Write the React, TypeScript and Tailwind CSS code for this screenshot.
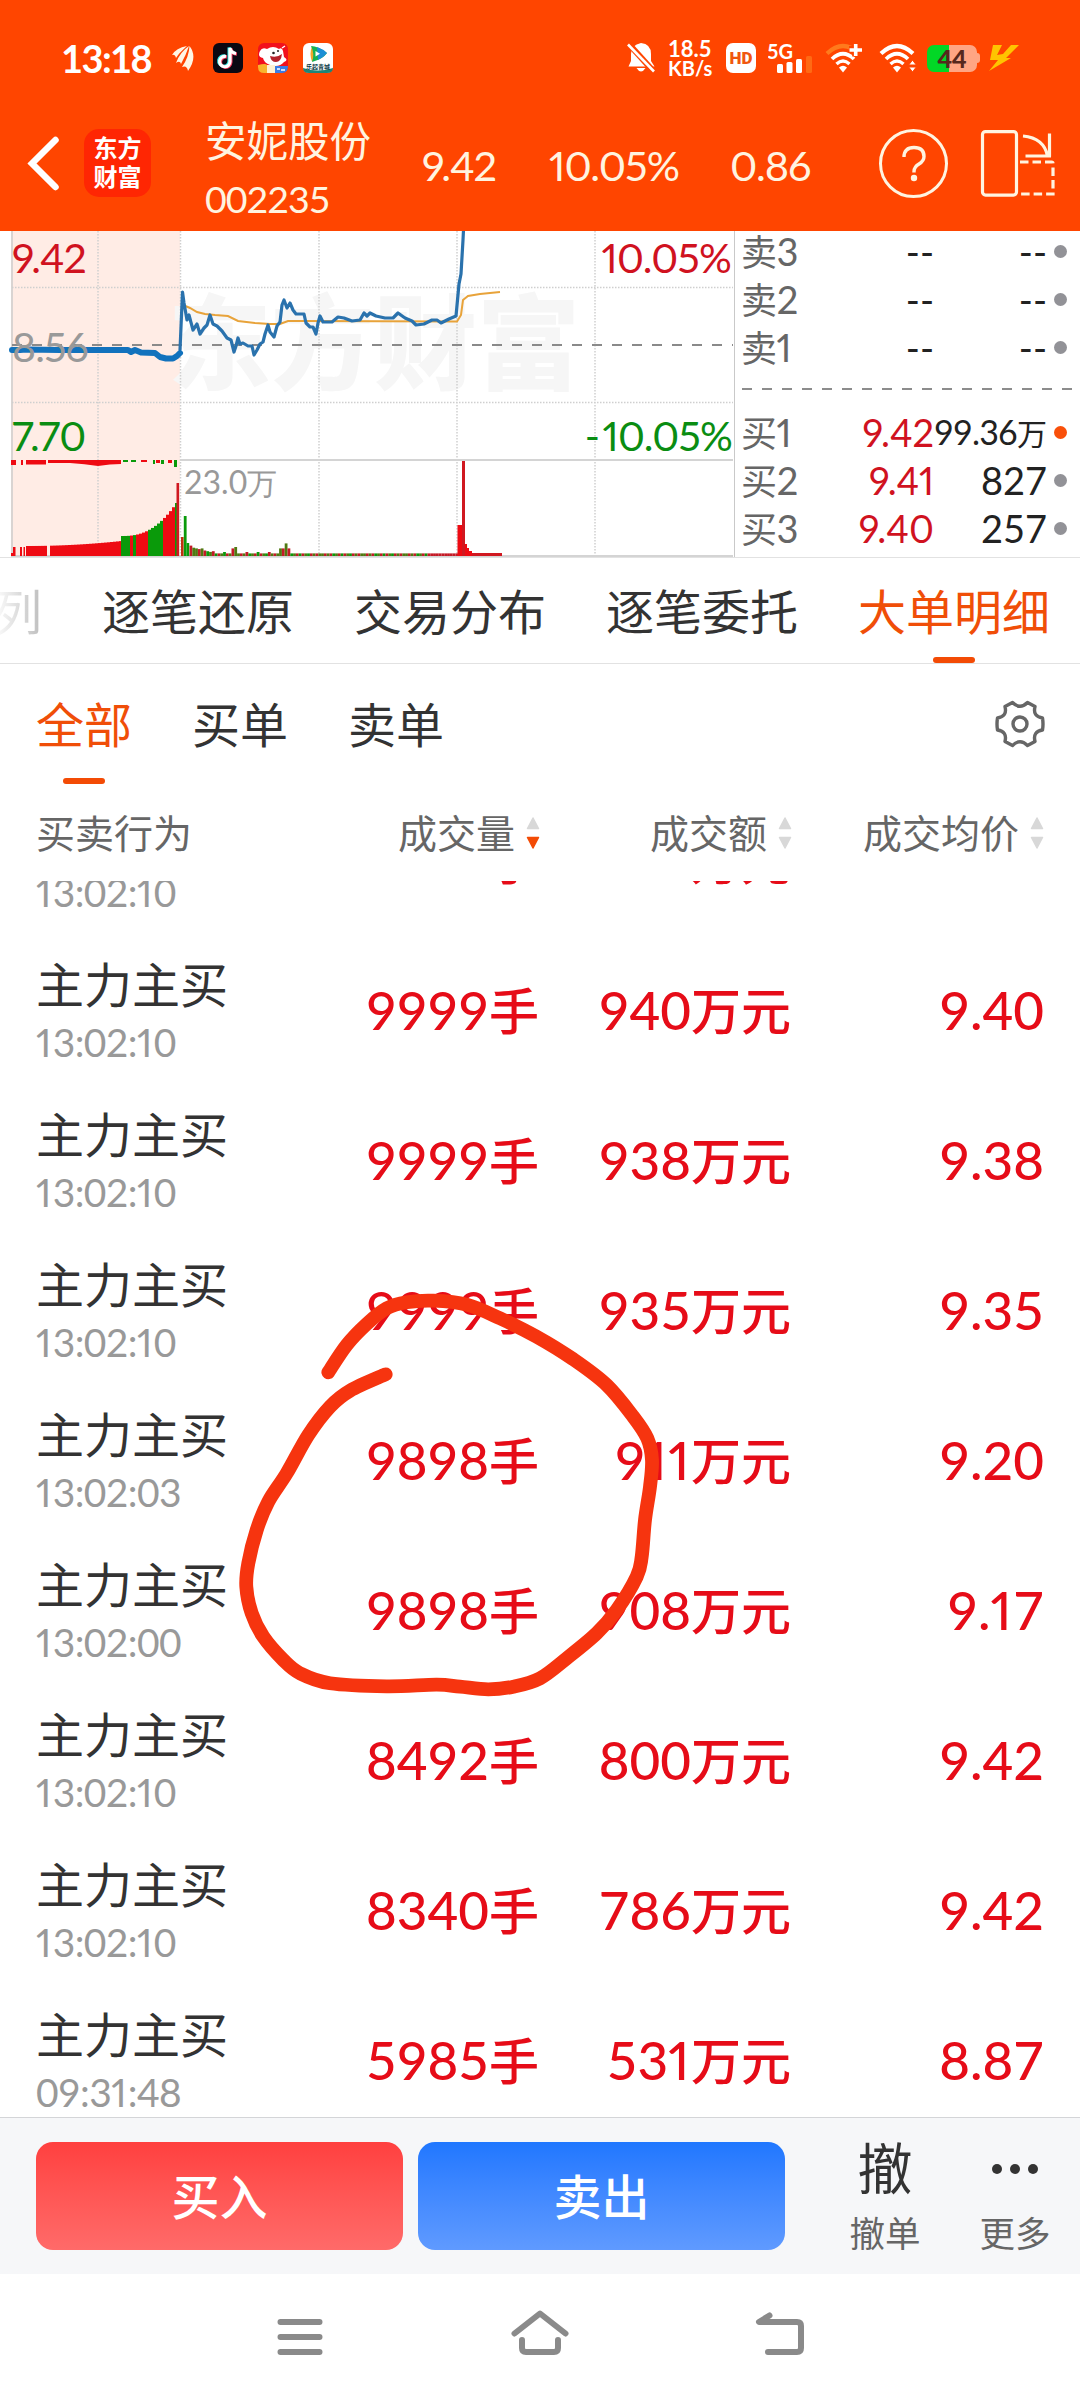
import React from "react";

/* Text whose digits use a Latin face and whose Han characters use the CJK face.
   Digits are tabular, save for the narrow "1". */
function Mixed({ text, num, className = "" }: { text: string; num: string; className?: string }) {
  const parts = text.match(/[\u4e00-\u9fff]+|1+|[^\u4e00-\u9fff1]+/g) ?? [];
  return (
    <span className={`whitespace-nowrap leading-none ${className}`}>
      {parts.map((p, i) =>
        /[\u4e00-\u9fff]/.test(p) ? (
          <span key={i}>{p}</span>
        ) : p[0] === "1" ? (
          <span key={i} className={`font-[Lato] proportional-nums ${num} tracking-[0.03em]`}>
            {p}
          </span>
        ) : (
          <span key={i} className={`font-[Lato] tabular-nums ${num}`}>
            {p}
          </span>
        ),
      )}
    </span>
  );
}

function WifiArcs({ top }: { top: string }) {
  return (
    <>
      <path d="M2 10.5 Q18 -4.5 34 10.5" stroke={top} strokeWidth="4.2" fill="none" />
      <path d="M7 16 Q18 5.5 29 16" stroke="#fff" strokeWidth="3.8" fill="none" />
      <path d="M11.5 21 Q18 15 24.5 21" stroke="#fff" strokeWidth="3.4" fill="none" />
      <path d="M14 24.5 Q18 21 22 24.5 L18 29.5Z" fill="#fff" />
    </>
  );
}

function StatusBar() {
  return (
    <div className="flex h-[116px] items-center pl-[61px] pr-[61px] text-white">
      <span className="w-[92px] font-[Lato] text-[38px] font-bold leading-none tracking-[-1.600px]">13:18</span>
      <svg className="ml-[18px] h-[26px] w-[24px]" viewBox="0 0 24 26" fill="#fff6e4">
        <path d="M1 10 Q5 3 16 1 Q8 8 5 13 Q4 9 1 10Z" />
        <path d="M5 18 Q9 7 18 1 Q15 10 10 19 Q9 15 5 18Z" />
        <path d="M11 22 Q18 12 18.500 1 Q27 12 17 26 Q16 20 11 22Z" />
      </svg>
      <svg className="ml-[18px] h-[30px] w-[30px]" viewBox="0 0 30 30">
        <rect width="30" height="30" rx="6" fill="#0b0812" />
        <g fill="none" strokeWidth="3.2">
          <path d="M13 13.500a5.200 5.200 0 1 0 4 5.200V5q1 5 6 5.500" stroke="#35e7e4" transform="translate(-.9 -.6)" />
          <path d="M13 13.500a5.200 5.200 0 1 0 4 5.200V5q1 5 6 5.500" stroke="#fa3b62" transform="translate(.9 .6)" />
          <path d="M13 13.500a5.200 5.200 0 1 0 4 5.200V5q1 5 6 5.500" stroke="#fff" />
        </g>
      </svg>
      <svg className="ml-[15px] h-[30px] w-[30px]" viewBox="0 0 30 30">
        <rect width="30" height="30" rx="6" fill="#f2101c" />
        <path d="M2 8q2-4 7-2 6-4 12 0 3-2 4 2l1 6q5 3 0 5-5 6-14 3Q6 20 5 15-1 14 2 8Z" fill="#fff" />
        <circle cx="15.500" cy="10" r="1.300" fill="#222" />
        <circle cx="20" cy="8" r="1" fill="#222" />
        <path d="M12 13q7 2 12-2-1 8-6 8-5 0-6-6Z" fill="#b4222b" />
        <path d="M0 22q8-2 9 0v8H6q-6 0-6-6Z" fill="#f8b42c" />
        <rect x="9" y="22" width="8" height="8" fill="#fff1d2" />
        <path d="M17 23h13q0 7-6 7h-7Z" fill="#3a7de4" />
        <path d="M19 26h3m1 1h4M24 5l3-2" stroke="#fff" strokeWidth="1.400" />
      </svg>
      <svg className="ml-[15px] h-[30px] w-[30px]" viewBox="0 0 30 30">
        <rect width="30" height="30" rx="6" fill="#fff" />
        <path d="M9 3.500q-3 7 0 15l5-3V5Z" fill="#f3a52a" />
        <path d="M8 3q7 0 16 7-4 6-15 9 3-8-1-16Z" fill="#16b254" />
        <path d="M14 4q6 2 10 6-3 4-9 7Z" fill="#1b8fd6" />
        <path d="M12.500 8v5.500l4.500-2.700Z" fill="#fff" />
        <path d="M0 25q15 5 30 0 0 5-6 5H6q-6 0-6-5Z" fill="#1d8577" />
        <text x="15" y="26" textAnchor="middle" fontSize="6" fontWeight="700" fill="#0c3b46" fontFamily="Noto Sans CJK SC, sans-serif">
          乐起青城
        </text>
      </svg>

      <div className="ml-auto flex items-center">
        <svg className="h-[32px] w-[28px]" viewBox="0 0 28 32">
          <path d="M14 1q10 1 10 11v7l3.500 5.500H1.500L4 19v-7Q4 3 14 1Z" fill="#fff" />
          <path d="M9.500 26q4.500 7 9 0Z" fill="#fff" />
          <path d="M0 0l28 31" stroke="#ff4500" strokeWidth="6" />
          <path d="M1 2.500l26 27" stroke="#fff" strokeWidth="2.600" />
        </svg>
        <div className="ml-[13px] flex w-[46px] flex-col font-[Lato] font-bold text-white">
          <span className="text-[22px] leading-[19px]">18.5</span>
          <span className="text-[20px] leading-[20px]">KB/s</span>
        </div>
        <span className="ml-[12px] flex h-[30px] w-[30px] items-center justify-center rounded-[7px] bg-white font-[Roboto] text-[17px] font-black leading-none text-[#f0570f]">
          HD
        </span>
        <svg className="ml-[12px] h-[32px] w-[45px]" viewBox="0 0 45 32">
          <text x="-1" y="16.500" fontSize="20" fontWeight="700" fill="#fff" fontFamily="Lato, sans-serif">5G</text>
          <rect x="9" y="22" width="6" height="9" rx="1.500" fill="#fff" />
          <rect x="18.500" y="20" width="6" height="11" rx="1.500" fill="#fff" />
          <rect x="28" y="17" width="6" height="14" rx="1.500" fill="#fff" />
          <rect x="38" y="14" width="6" height="17" rx="1.500" fill="#ff6a14" />
        </svg>
        <svg className="ml-[12px] h-[30px] w-[38px]" viewBox="0 0 38 30">
          <WifiArcs top="#ff7a1c" />
          <path d="M24 6.500h13.500M30.700 0v13.500" stroke="#ff4500" strokeWidth="7" />
          <path d="M24.500 7H37M30.700 1v12" stroke="#fff" strokeWidth="3.600" />
        </svg>
        <svg className="ml-[16px] h-[30px] w-[38px]" viewBox="0 0 38 30">
          <WifiArcs top="#fff" />
          <path d="M33.500 17l3.800 5h-7.600ZM33.500 29l3.800-5h-7.600Z" fill="#fff" stroke="#ff4500" strokeWidth="1" />
        </svg>
        <div className="ml-[10px] flex items-center">
          <span className="flex h-[27px] w-[50px] items-center justify-center rounded-[7px] bg-linear-to-r from-[#02d726] from-44% to-[#ffa583] to-44% font-[Lato] text-[25px] font-black leading-none text-[#57281c]">
            44
          </span>
          <span className="h-[10px] w-[3px] rounded-r-sm bg-[#ffa583]" />
        </div>
        <svg className="ml-[9px] h-[26px] w-[30px]" viewBox="0 0 30 26">
          <path d="M4 0h9L8 10l6-1L22 0h8L17 13h5L0 26l9-11H1Z" fill="#ffc400" />
        </svg>
      </div>
    </div>
  );
}

function Header() {
  return (
    <div className="flex h-[115px] items-start pl-[26px] text-[#fff4e0]">
      <svg className="mt-[19px] h-[58px] w-[36px]" viewBox="0 0 36 58">
        <path d="M29.500 5L6 28.500 29.500 52" fill="none" stroke="#fff" strokeWidth="6.500" strokeLinecap="round" />
      </svg>
      <div className="ml-[22px] mt-[13px] flex h-[68px] w-[67px] flex-col items-center rounded-[15px] bg-[#ff2603] pt-[3px] text-[24px] font-bold leading-[29px] text-white">
        <span>东方</span>
        <span>财富</span>
      </div>
      <div className="ml-[54px] flex w-[190px] flex-col">
        <span className="h-[50px] text-[41.500px] leading-[46px]">安妮股份</span>
        <span className="mt-[14px] font-[Lato] text-[37.500px] leading-none tracking-[-1px]">002235</span>
      </div>
      <span className="ml-[27px] mt-[29px] w-[127px] font-[Lato] text-[41.500px] leading-none proportional-nums tracking-[-1px]">9.42</span>
      <span className="mt-[29px] w-[181px] font-[Lato] text-[41.500px] leading-none proportional-nums tracking-[-1px]">10.05%</span>
      <span className="mt-[29px] w-[149px] font-[Lato] text-[41.500px] leading-none proportional-nums tracking-[-1px]">0.86</span>
      <span className="mt-[13px] flex h-[69px] w-[69px] items-center justify-center rounded-full border-[3px] border-[#fff4e0]">
        <svg className="h-[38px] w-[26px]" viewBox="0 0 26 38">
          <path d="M3 12Q3 2.500 13 2.500T23 11.500q0 4.500-5 7.500-5 3-5 7.500v1" fill="none" stroke="#fff4e0" strokeWidth="3.400" />
          <circle cx="13" cy="33" r="3.200" fill="#fff4e0" />
        </svg>
      </span>
      <svg className="ml-[31px] mt-[12px] h-[70px] w-[76px]" viewBox="0 0 76 70" fill="none" stroke="#fff4e0" strokeWidth="3.200">
        <rect x="3.500" y="3.600" width="34" height="63.500" rx="3" />
        <path d="M44 8q21 2 24.500 20M70.500 5.500v23M46.500 28h25.500" />
        <path d="M41 34h31.500q1.500 0 1.500 1.500V66H41" strokeDasharray="8.500 4" />
      </svg>
    </div>
  );
}

const PRE = "12,350 20,350 26,349.500 60,350 100,350 128,350 131,352 135,350 141,352.500 155,353 160,357 166,358.500 173,358.500 177,356 180,353";
const PRICE =
  "180,350 182.500,292 184,303 187,320 189,315 193,330 197,324 200,334 204,328 207,325 210,315 213,324 217,326 222,331 227,338 231,340 234,352 236,346 238,338 240,344 243,343 248,346 252,346 254,355 257,350 260,344 263,342 265,334 268,325 270,332 274,337 277,326 280,322 282,305 284,300 287,308 290,303 293,310 296,314 304,314 306,323 310,327 313,327 316,334 318,323 320,316 323,322 332,322 338,317 344,318 352,321 360,320 364,313 367,316 370,313 376,316 385,318 393,318 398,313 405,318 412,321 416,325 424,324 432,320 437,320 441,323 449,319 456,316 459,284 461,274 463,240 463.500,230";
const AVERAGE =
  "183,305 190,308 197,312 205,314 215,315 228,316 238,321 255,323 270,324 280,324 288,321 300,321 457,321.500 461,315 463,300 468,296 480,294 500,292";

/* Volume bars as [x, width, height, colour]. */
const RED = "#ee0a12";
const GREEN = "#0a9a0a";
const volume: [number, number, number, string][] = [];
volume.push([11, 4, 3, RED], [13, 2.5, 9, RED], [20, 2, 9, RED], [23.500, 1.5, 9, RED]);
for (let x = 26; x < 120; x += 3) if (x < 45 || x > 47) volume.push([x, 3, 10 + ((x - 26) / 94) ** 2 * 5, RED]);
for (let x = 121; x < 178; x += 3) {
  const h = 20 + ((x - 121) / 54) ** 2.4 * 33;
  const green = x < 128 || (x > 131 && x < 135) || (x >= 148 && x < 163) || x === 175;
  volume.push([x, 3, h, green ? GREEN : RED]);
}
volume.push([176.5, 2.6, 73, "#d01820"], [181, 2.6, 19, "#c03010"], [183.8, 2.8, 40, GREEN], [186.6, 2.6, 13, GREEN]);
for (let i = 0; i < 96; i++) {
  const x = 189.5 + i * 2.8;
  const base = x < 212 ? 9 - (x - 189.5) * 0.25 : 2.6;
  const bump = Math.abs(x - 234) < 3 ? 5 : Math.abs(x - 284) < 2 ? 10 : Math.abs(x - 284) < 5 ? 5 : 0;
  volume.push([x, 2.8, base + bump + (x < 270 && i % 4 === 0 ? 1.4 : 0), (i * 7) % 5 < 2 || x > 430 ? "#c41a26" : i % 3 ? "#4f7a12" : GREEN]);
}
volume.push([457.5, 5, 31, RED], [462, 3, 95, "#d01820"], [465, 2, 12, RED], [467, 2, 8, RED], [469, 3, 5, RED], [472, 30, 3, "#d01820"]);

function Chart() {
  return (
    <div className="relative h-[326px] w-[735px] border-r border-[#c9c9c9]">
      <svg className="absolute inset-0" width="735" height="326" viewBox="0 231 735 326">
        <rect x="12" y="231" width="168" height="326" fill="#ffece5" />
        <text x="168" y="382" fontSize="103" fontWeight="900" fill="#f6f6f6" fontFamily="Noto Sans CJK SC, sans-serif">
          东方财富
        </text>
        <path d="M12 231V557" stroke="#d9d4d2" strokeWidth="2" />
        <path d="M98 231V557M180.500 231V557M319 231V557M457 231V557M595 231V557M12 287.500H733M12 402.500H733" stroke="#cfcfcf" strokeWidth="1.500" strokeDasharray="1.500 1.500" />
        <path d="M12 345H733" stroke="#8a8a8a" strokeWidth="2" strokeDasharray="10 10" />
        <path d="M180 460H733M12 556H733" stroke="#d4d4d4" strokeWidth="2" />
        <polyline points={PRE} fill="none" stroke="#1272bd" strokeWidth="6" strokeLinejoin="round" strokeLinecap="round" />
        <polyline points={AVERAGE} fill="none" stroke="#e8a33a" strokeWidth="2" />
        <polyline points={PRICE} fill="none" stroke="#2a72ad" strokeWidth="3.200" strokeLinejoin="round" />
        <path d="M11 460h5v5h-5ZM21 460h2v5h-2ZM26 460h20v4.500H26ZM48 460h73v4Q110 464 98 466 85 464 70 463H48Z" fill={RED} />
        <path d="M123 460h5v2h-5ZM131 460h5v2h-5ZM153 460h2v4h-2ZM161 460h3v4h-3ZM174 460h3v7h-3Z" fill={GREEN} />
        <path d="M141 460h6v2h-6ZM156 460h4v3h-4ZM168 460h4v3h-4Z" fill={RED} />
        {volume.map(([x, w, h, c], i) => (
          <rect key={i} x={x} y={556 - h} width={w} height={h} fill={c} />
        ))}
      </svg>
      <div className="relative flex h-full flex-col font-[Lato] text-[41px] leading-none proportional-nums">
        <div className="mt-[6px] flex justify-between pl-[12px] pr-[3px] tracking-[-0.8px] text-[#d0121f]">
          <span>9.42</span>
          <span>10.05%</span>
        </div>
        <span className="ml-[12px] mt-[48px] tracking-[-0.8px] text-[#999]">8.56</span>
        <div className="mt-[48px] flex justify-between pl-[12px] pr-[2px] tracking-[-0.800px] text-[#0a8d12]">
          <span>7.70</span>
          <span>
            <span className="tracking-[2.500px]">-</span>10.05%
          </span>
        </div>
        <Mixed text="23.0万" num="text-[32px]" className="ml-[184px] mt-[10px] text-[30px] text-[#999]" />
      </div>
    </div>
  );
}

const asks = ["卖3", "卖2", "卖1"];
const bids = [
  { label: "买1", price: "9.42", qty: "99.36万", hot: true },
  { label: "买2", price: "9.41", qty: "827", hot: false },
  { label: "买3", price: "9.40", qty: "257", hot: false },
];

function BookRow({ label, price, qty, hot }: { label: string; price: string; qty: string; hot?: boolean }) {
  const none = price === "--";
  return (
    <div className="flex h-[48px] items-center pl-[6px]">
      <Mixed text={label} num="text-[38px]" className="w-[70px] shrink-0 text-[36px] tracking-[-0.5px] text-[#666]" />
      <span className={`w-[123px] shrink-0 text-right font-[Lato] text-[38px] leading-none proportional-nums ${none ? "text-[#222]" : "text-[#d0121f]"}`}>{price}</span>
      <Mixed
        text={qty}
        num={hot ? "text-[34px] tracking-[-0.8px]" : "text-[38px]"}
        className={`w-[113px] shrink-0 text-right text-[30px] text-[#222] ${hot ? "flex items-baseline justify-end" : ""}`}
      />
      <span className={`ml-[7px] h-[13px] w-[13px] shrink-0 rounded-full ${hot ? "bg-[#f9500a]" : "bg-[#929297]"}`} />
    </div>
  );
}

function OrderBook() {
  return (
    <div className="flex flex-1 flex-col overflow-hidden">
      <div className="-mt-[4px]">
        {asks.map((a) => (
          <BookRow key={a} label={a} price="--" qty="--" />
        ))}
      </div>
      <svg className="ml-[7px] mt-[17px] h-[2px] w-[331px] shrink-0" viewBox="0 0 331 2">
        <path d="M0 1H331" stroke="#8c8c8c" strokeWidth="2" strokeDasharray="10 10" />
      </svg>
      <div className="mt-[18px]">
        {bids.map((b) => (
          <BookRow key={b.label} {...b} />
        ))}
      </div>
    </div>
  );
}

function Tabs() {
  return (
    <div className="flex h-[107px] justify-end gap-[60px] overflow-hidden border-b border-t border-[#e2e2e2] pr-[30px] text-[48px] text-[#333]">
      <span className="bg-linear-to-r from-[#ffffff] to-[#bdbdbd] bg-clip-text leading-[102px] text-transparent">列</span>
      <span className="shrink-0 leading-[102px]">逐笔还原</span>
      <span className="shrink-0 leading-[102px]">交易分布</span>
      <span className="shrink-0 leading-[102px]">逐笔委托</span>
      <span className="relative shrink-0 leading-[102px] text-[#f04e08]">
        大单明细
        <span className="absolute bottom-0 left-1/2 h-[6px] w-[42px] -translate-x-1/2 rounded-full bg-[#f34b05]" />
      </span>
    </div>
  );
}

function SubTabs() {
  return (
    <div className="flex h-[120px] items-start gap-[60px] pl-[36px] pr-[35px] text-[48px] text-[#333]">
      <span className="relative h-full leading-[117px] text-[#f04e08]">
        全部
        <span className="absolute bottom-0 left-1/2 h-[6px] w-[42px] -translate-x-1/2 rounded-full bg-[#f34b05]" />
      </span>
      <span className="leading-[117px]">买单</span>
      <span className="leading-[117px]">卖单</span>
      <svg className="ml-auto mt-[36px] h-[48px] w-[50px]" viewBox="-25 -24 50 48" fill="none" stroke="#666" strokeWidth="3.400" strokeLinejoin="round">
        <path d="M-7.500 -21.500Q0 -14 7.500 -21.500L15 -17.500Q12.500 -7.500 22.500 -6Q23.500 0 22.500 6Q12.500 7.500 15 17.500L7.500 21.500Q0 14 -7.500 21.500L-15 17.500Q-12.500 7.500 -22.500 6Q-23.500 0 -22.500 -6Q-12.500 -7.500 -15 -17.500Z" />
        <circle r="7" />
      </svg>
    </div>
  );
}

function Sort({ active }: { active?: boolean }) {
  return (
    <svg className="ml-[11px] mt-[3px] h-[34px] w-[14px]" viewBox="0 0 14 34" strokeWidth="1.500" strokeLinejoin="round">
      <path d="M7 2l5.500 10.500h-11Z" fill="#d8d8d8" stroke="#d8d8d8" />
      <path d="M7 32l5.500-10.500h-11Z" fill={active ? "#f34b05" : "#d8d8d8"} stroke={active ? "#f34b05" : "#d8d8d8"} />
    </svg>
  );
}

function TableHead() {
  return (
    <div className="flex h-[97px] items-center pb-[3px] pl-[36px] pr-[36px] text-[39px] leading-none text-[#666]">
      <span className="w-[181px]">买卖行为</span>
      <span className="flex w-[323px] items-center justify-end">成交量<Sort active /></span>
      <span className="flex w-[252px] items-center justify-end">成交额<Sort /></span>
      <span className="flex w-[252px] items-center justify-end">成交均价<Sort /></span>
    </div>
  );
}

const orders = [
  ["13:02:10", "9999手", "941万元", "9.41"],
  ["13:02:10", "9999手", "940万元", "9.40"],
  ["13:02:10", "9999手", "938万元", "9.38"],
  ["13:02:10", "9999手", "935万元", "9.35"],
  ["13:02:03", "9898手", "911万元", "9.20"],
  ["13:02:00", "9898手", "908万元", "9.17"],
  ["13:02:10", "8492手", "800万元", "9.42"],
  ["13:02:10", "8340手", "786万元", "9.42"],
  ["09:31:48", "5985手", "531万元", "8.87"],
];

function OrderRow({ row }: { row: string[] }) {
  return (
    <div className="flex h-[150px] items-center pl-[36px] text-[#e60c18]">
      <div className="flex w-[213px] flex-col">
        <span className="text-[48px] leading-[54px] text-[#333]">主力主买</span>
        <Mixed text={row[0]} num="text-[39px]" className="mt-[12px] h-[46px] text-[39px] tracking-[-0.600px] text-[#999]" />
      </div>
      <Mixed text={row[1]} num="text-[53px]" className="w-[290px] pb-[4px] text-right text-[50px] font-medium" />
      <Mixed text={row[2]} num="text-[53px]" className="w-[252px] pb-[4px] text-right text-[50px] font-medium" />
      <Mixed text={row[3]} num="text-[53px]" className="w-[253px] pb-[3px] text-right text-[50px] font-medium" />
    </div>
  );
}

/* Freehand loop drawn over the list; points are joined by a smooth curve. */
const LOOP: [number, number][] = [
  [328.3, 1372.3], [346.7, 1345], [366.7, 1324], [386.7, 1308.3], [406.7, 1302.3], [433.3, 1300.7], [466.7, 1304.7], [500, 1318.3],
  [536.7, 1336.7], [573.3, 1359.3], [606.7, 1385], [633.3, 1416.7], [647.3, 1438.3], [652, 1460], [650, 1486.7], [645, 1520],
  [641.7, 1556.7], [636.7, 1576.7], [616.7, 1610], [596.7, 1633.3], [566.7, 1658.3], [540, 1678.3], [513.3, 1686.7], [488.3, 1689.3],
  [460, 1686.7], [436.7, 1684.7], [386.7, 1686.3], [330, 1683.3], [300, 1673.3], [283.3, 1660], [263.3, 1636.7], [251.7, 1613.3],
  [246.3, 1586.7], [248.3, 1563.3], [256.7, 1530], [268.3, 1501.7], [286.7, 1473.3], [308.3, 1435], [330, 1406.7], [350, 1390.7], [385.7, 1374.3],
];

function smooth(p: [number, number][]) {
  let d = `M${p[0][0]} ${p[0][1]}`;
  for (let i = 0; i < p.length - 1; i++) {
    const a = p[Math.max(i - 1, 0)];
    const b = p[i];
    const c = p[i + 1];
    const e = p[Math.min(i + 2, p.length - 1)];
    d += ` C${b[0] + (c[0] - a[0]) / 6} ${b[1] + (c[1] - a[1]) / 6} ${c[0] - (e[0] - b[0]) / 6} ${c[1] - (e[1] - b[1]) / 6} ${c[0]} ${c[1]}`;
  }
  return d;
}

function OrderList() {
  return (
    <div className="relative h-[1236px] overflow-hidden">
      <div className="-mt-[95px]">
        {orders.map((r, i) => (
          <OrderRow key={i} row={r} />
        ))}
      </div>
      <svg className="absolute left-[230px] top-[399px]" width="440" height="430" viewBox="230 1280 440 430">
        <path d={smooth(LOOP)} fill="none" stroke="#f6340f" strokeWidth="13.800" strokeLinecap="round" strokeLinejoin="round" />
      </svg>
    </div>
  );
}

function ActionBar() {
  return (
    <div className="flex h-[157px] items-start border-t border-[#d4d5d8] bg-[#f6f7f9] pl-[36px] pt-[24px]">
      <button className="flex h-[108px] w-[367px] items-center justify-center rounded-[17px] bg-linear-to-b from-[#ff3f3f] to-[#ff6a69] pb-[4px] text-[48px] font-medium leading-none text-white">
        买入
      </button>
      <button className="ml-[15px] flex h-[108px] w-[367px] items-center justify-center rounded-[17px] bg-linear-to-b from-[#1f77ff] to-[#5f9aff] pb-[4px] text-[48px] font-medium leading-none text-white">
        卖出
      </button>
      <div className="ml-[35px] flex w-[130px] flex-col items-center">
        <span className="h-[66px] text-[55px] leading-[47px] text-[#333]">撤</span>
        <span className="text-[35.500px] leading-[48px] text-[#666]">撤单</span>
      </div>
      <div className="flex w-[130px] flex-col items-center">
        <span className="flex h-[66px] gap-[8px] pt-[22px]">
          <i className="h-[10px] w-[10px] rounded-full bg-[#333]" />
          <i className="h-[10px] w-[10px] rounded-full bg-[#333]" />
          <i className="h-[10px] w-[10px] rounded-full bg-[#333]" />
        </span>
        <span className="text-[35.500px] leading-[48px] text-[#666]">更多</span>
      </div>
    </div>
  );
}

function NavBar() {
  return (
    <div className="flex h-[126px] items-start justify-center gap-[180px] pt-[33px]">
      <svg width="60" height="60" viewBox="0 0 60 60" stroke="#8a8a8a" strokeWidth="6" strokeLinecap="round" fill="none">
        <path d="M10.500 15H49.500M10.500 30H49.500M10.500 45H49.500" />
      </svg>
      <svg width="60" height="60" viewBox="0 0 60 60" stroke="#8a8a8a" strokeWidth="6" strokeLinecap="round" strokeLinejoin="round" fill="none">
        <path d="M4.500 26.500L30 6.500 55.500 26.500M12 33v8q0 4 4 4h28q4 0 4-4v-8" />
      </svg>
      <svg width="60" height="60" viewBox="0 0 60 60" stroke="#8a8a8a" strokeWidth="6" strokeLinecap="round" strokeLinejoin="round" fill="none">
        <path d="M19.500 8.500L9 15H47q4 0 4 4v22q0 4-4 4H18" />
      </svg>
    </div>
  );
}

export default function App() {
  return (
    <div className="flex h-[2400px] w-[1080px] flex-col overflow-hidden bg-white font-['Noto_Sans_CJK_SC',sans-serif]">
      <div className="h-[231px] bg-[#ff4500]">
        <StatusBar />
        <Header />
      </div>
      <div className="flex h-[326px]">
        <Chart />
        <OrderBook />
      </div>
      <Tabs />
      <SubTabs />
      <TableHead />
      <OrderList />
      <ActionBar />
      <NavBar />
    </div>
  );
}
